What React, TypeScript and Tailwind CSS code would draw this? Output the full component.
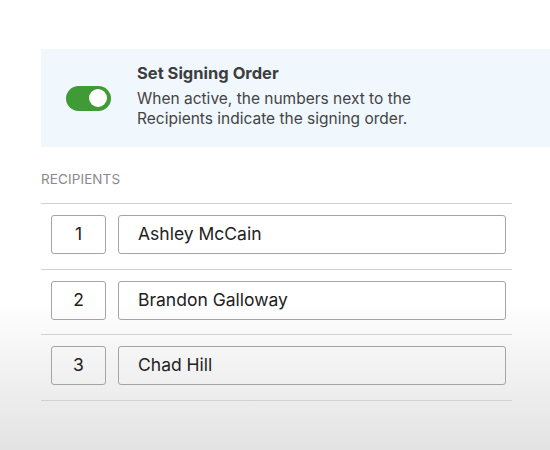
import React from 'react';

const recipients = [
  { order: 1, name: 'Ashley McCain' },
  { order: 2, name: 'Brandon Galloway' },
  { order: 3, name: 'Chad Hill' },
];

const Toggle: React.FC = () => (
  <div className="w-[45px] h-[25px] rounded-full bg-[#3f9b36] flex items-center justify-end pr-[4px] shrink-0">
    <div className="w-[18px] h-[18px] rounded-full bg-white"></div>
  </div>
);

export default function App() {
  return (
    <div
      className="w-[550px] h-[450px] overflow-hidden bg-[linear-gradient(to_bottom,#ffffff_0px,#ffffff_300px,#e3e3e3_450px)] pt-[49px] pl-[41px] text-[#3a3a3a]"
      style={{ fontFamily: 'Inter, "Noto Sans", sans-serif' }}
    >
      <div className="bg-[#f0f7fd] h-[98px] flex items-center pl-[25px]">
        <Toggle />
        <div className="ml-[26px] -mt-[5px]">
          <h3 className="text-[16.5px] font-bold leading-[20px] text-[#3d3d3d]">Set Signing Order</h3>
          <p className="text-[15.5px] leading-[20px] mt-[6px] text-[#444]">
            When active, the numbers next to the
            <br />
            Recipients indicate the signing order.
          </p>
        </div>
      </div>

      <div className="w-[471px] mt-[23px]">
        <p className="text-[13.5px] uppercase text-[#8a8a8a] leading-[18px] tracking-[0.1px]">Recipients</p>
        <div className="mt-[15px] border-t border-[#d2d2d2]">
          {recipients.map((r) => (
            <div key={r.order} className="flex items-center gap-[12px] pl-[10px] pr-[6px] pt-[11px] pb-[14.5px] border-b border-[#d2d2d2]">
              <div className="w-[55px] h-[39px] border border-[#a4a4a4] rounded-[3px] flex items-center justify-center text-[17.5px] text-[#222]">
                {r.order}
              </div>
              <div className="flex-1 h-[39px] border border-[#a4a4a4] rounded-[3px] flex items-center pl-[19px] text-[17.5px] text-[#222]">
                {r.name}
              </div>
            </div>
          ))}
        </div>
      </div>
    </div>
  );
}
